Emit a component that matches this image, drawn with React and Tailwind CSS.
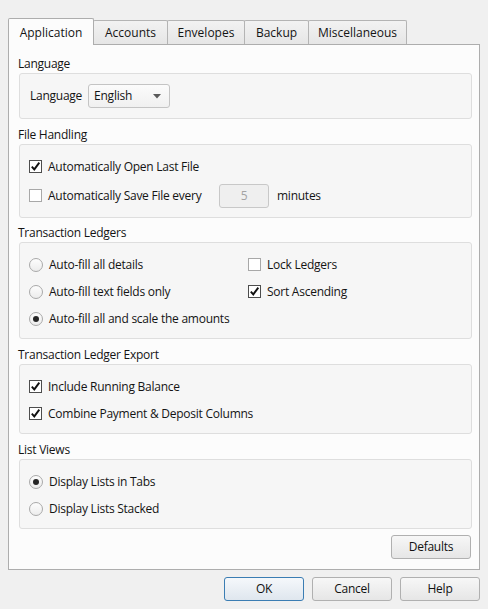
import { useState } from 'react';

const tabs = ['Application', 'Accounts', 'Envelopes', 'Backup', 'Miscellaneous'];
const tabWidths = ['w-[86px]', 'w-[75px]', 'w-[78px]', 'w-[65px]', 'w-[99px]'];

function CheckBox({ checked }) {
  return (
    <span
      className={`flex h-[13px] w-[13px] shrink-0 items-center justify-center border bg-white ${
        checked ? 'border-[#4d4d4d]' : 'border-[#a8a8a8]'
      }`}
    >
      {checked && (
        <svg width="11" height="11" viewBox="0 0 11 11">
          <path d="M1.8 5.6 L4.3 8.4 L9.3 1.6" fill="none" stroke="#111" strokeWidth="1.9" />
        </svg>
      )}
    </span>
  );
}

function Radio({ checked }) {
  return (
    <span className="flex h-[14px] w-[14px] shrink-0 items-center justify-center rounded-full border border-[#a9a9a9] bg-gradient-to-b from-[#fdfdfd] to-[#ececec]">
      {checked && <span className="h-[6px] w-[6px] rounded-full bg-[#262626]" />}
    </span>
  );
}

function Row({ children, control }) {
  return (
    <div className="flex h-[27px] items-center gap-[6px]">
      {control}
      <span>{children}</span>
    </div>
  );
}

function Group({ title, className, children }) {
  return (
    <div className="flex flex-col">
      <div className="h-[18px] pl-[9px] leading-[18px]">{title}</div>
      <div
        className={`ml-[10px] mr-[7px] rounded-[3px] border border-[#dedede] bg-[#f6f6f6] pl-[9px] ${className}`}
      >
        {children}
      </div>
    </div>
  );
}

function Button({ children, primary, className = '' }) {
  return (
    <button
      className={`flex h-[24px] w-[80px] items-center justify-center rounded-[3px] border ${
        primary
          ? 'border-[#3b7db3] bg-gradient-to-b from-[#f5f8fb] to-[#dfe6ee]'
          : 'border-[#b0b0b0] bg-gradient-to-b from-[#f7f7f7] to-[#e6e6e6]'
      } text-[#111] ${className}`}
    >
      {children}
    </button>
  );
}

export default function App() {
  const [active] = useState(0);
  return (
    <div
      className="flex h-[609px] w-[488px] flex-col bg-[#f0f0f0] text-[12px] tracking-[-0.25px] text-[#141414]"
      style={{ fontFamily: '"Open Sans", "Noto Sans", sans-serif' }}
    >
      {/* tab strip */}
      <div className="flex h-[44px] items-end pl-[8px]">
        {tabs.map((t, i) =>
          i === active ? (
            <div
              key={t}
              className={`relative z-10 -mb-px flex h-[27px] items-start justify-center rounded-t-[2px] border border-b-0 border-[#adadad] bg-[#fcfcfc] pt-[5px] tracking-normal ${tabWidths[i]}`}
            >
              {t}
            </div>
          ) : (
            <div
              key={t}
              className={`-ml-px flex h-[24px] items-center justify-center rounded-t-[2px] border border-b-0 border-[#b4b4b4] bg-gradient-to-b from-[#f2f2f2] to-[#e6e6e6] tracking-normal ${tabWidths[i]}`}
            >
              {t}
            </div>
          ),
        )}
      </div>

      {/* panel */}
      <div className="ml-[8px] flex h-[526px] w-[472px] flex-col border border-[#adadad] bg-[#fcfcfc] pt-[10px]">
        <Group title="Language" className="flex h-[46px] items-center gap-[6px] pl-[10px]">
          <span>Language</span>
          <div className="flex h-[24px] w-[82px] items-center justify-between rounded-[3px] border border-[#c4c4c4] bg-gradient-to-b from-[#fbfbfb] to-[#f0f0f0] pl-[5px] pr-[8px]">
            <span>English</span>
            <svg width="8" height="5" viewBox="0 0 8 5">
              <path d="M0 0 H8 L4 4.5 Z" fill="#5a5a5a" />
            </svg>
          </div>
        </Group>

        <div className="mt-[7px]">
          <Group title="File Handling" className="flex h-[74px] flex-col pt-[8px]">
            <Row control={<CheckBox checked />}>Automatically Open Last File</Row>
            <div className="mt-[2px] flex h-[27px] items-center">
              <CheckBox />
              <span className="ml-[6px] w-[171px]">Automatically Save File every</span>
              <div className="flex h-[24px] w-[50px] items-center justify-center rounded-[3px] border border-[#c8c8c8] bg-[#efefef] text-[#a3a3a3]">
                5
              </div>
              <span className="ml-[8px]">minutes</span>
            </div>
          </Group>
        </div>

        <div className="mt-[6px]">
          <Group title="Transaction Ledgers" className="grid h-[97px] grid-cols-[219px_1fr] content-start pt-[8px]">
            <div className="flex flex-col">
              <Row control={<Radio />}>Auto-fill all details</Row>
              <Row control={<Radio />}>Auto-fill text fields only</Row>
              <Row control={<Radio checked />}>Auto-fill all and scale the amounts</Row>
            </div>
            <div className="flex flex-col">
              <Row control={<CheckBox />}>Lock Ledgers</Row>
              <Row control={<CheckBox checked />}>Sort Ascending</Row>
            </div>
          </Group>
        </div>

        <div className="mt-[7px]">
          <Group title="Transaction Ledger Export" className="flex h-[70px] flex-col pt-[8px]">
            <Row control={<CheckBox checked />}>Include Running Balance</Row>
            <Row control={<CheckBox checked />}>Combine Payment &amp; Deposit Columns</Row>
          </Group>
        </div>

        <div className="mt-[7px]">
          <Group title="List Views" className="flex h-[70px] flex-col pt-[8px]">
            <Row control={<Radio checked />}>Display Lists in Tabs</Row>
            <Row control={<Radio />}>Display Lists Stacked</Row>
          </Group>
        </div>

        <div className="mr-[8px] mt-[6px] flex justify-end">
          <Button>Defaults</Button>
        </div>
      </div>

      {/* dialog buttons */}
      <div className="mt-[7px] flex justify-end gap-[8px] pr-[8px]">
        <Button primary>OK</Button>
        <Button>Cancel</Button>
        <Button>Help</Button>
      </div>
    </div>
  );
}
